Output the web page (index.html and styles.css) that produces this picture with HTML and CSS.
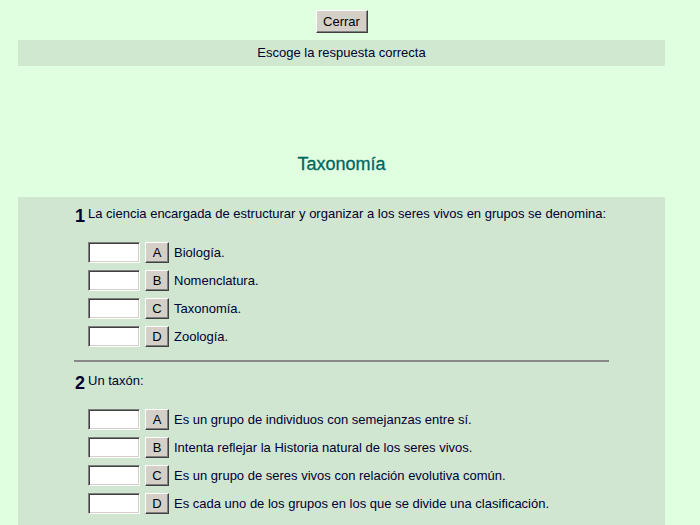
FILE: index.html
```html
<!DOCTYPE html>
<html lang="es">
<head>
<meta charset="utf-8">
<title>Taxonomía</title>
<link rel="stylesheet" href="styles.css">
</head>
<body>
<div class="page">
<div class="top"><button class="btn close">Cerrar</button></div>
<div class="banner">Escoge la respuesta correcta</div>
<h1 class="title">Taxonomía</h1>
<div class="panel">
  <div class="question">
    <div class="q-head"><span class="q-num">1</span><span class="q-text">La ciencia encargada de estructurar y organizar a los seres vivos en grupos se denomina:</span></div>
    <div class="options">
      <div class="opt"><input class="ans" type="text"><button class="btn letter">A</button><span class="opt-text">Biología.</span></div>
      <div class="opt"><input class="ans" type="text"><button class="btn letter">B</button><span class="opt-text">Nomenclatura.</span></div>
      <div class="opt"><input class="ans" type="text"><button class="btn letter">C</button><span class="opt-text">Taxonomía.</span></div>
      <div class="opt"><input class="ans" type="text"><button class="btn letter">D</button><span class="opt-text">Zoología.</span></div>
    </div>
  </div>
  <hr class="sep">
  <div class="question">
    <div class="q-head"><span class="q-num">2</span><span class="q-text">Un taxón:</span></div>
    <div class="options">
      <div class="opt"><input class="ans" type="text"><button class="btn letter">A</button><span class="opt-text">Es un grupo de individuos con semejanzas entre sí.</span></div>
      <div class="opt"><input class="ans" type="text"><button class="btn letter">B</button><span class="opt-text">Intenta reflejar la Historia natural de los seres vivos.</span></div>
      <div class="opt"><input class="ans" type="text"><button class="btn letter">C</button><span class="opt-text">Es un grupo de seres vivos con relación evolutiva común.</span></div>
      <div class="opt"><input class="ans" type="text"><button class="btn letter">D</button><span class="opt-text">Es cada uno de los grupos en los que se divide una clasificación.</span></div>
    </div>
  </div>
</div>
</div>
</body>
</html>
```
FILE: styles.css
```css
html, body {
  margin: 0;
  padding: 0;
  background: #e0ffe0;
  font-family: "Liberation Sans", Arial, sans-serif;
  font-size: 13px;
  color: #000033;
}
.page {
  width: 683px;
}
.top {
  padding-top: 10px;
  text-align: center;
  height: 23px;
}
.btn {
  font-family: "Liberation Sans", Arial, sans-serif;
  font-size: 13px;
  color: #000;
  background: #d4d0c8;
  border: 1px solid;
  border-color: #ffffff #404040 #404040 #ffffff;
  box-shadow: inset -1px -1px 0 #808080;
  padding: 0;
  margin: 0;
  box-sizing: border-box;
}
.close {
  width: 52px;
  height: 23px;
}
.banner {
  margin: 7px 18px 0 18px;
  height: 26px;
  line-height: 26px;
  background: #d0e8d0;
  text-align: center;
}
.title {
  margin: 87px 0 0 0;
  height: 22px;
  line-height: 22px;
  font-size: 18px;
  font-weight: normal;
  color: #006660;
  text-align: center;
  -webkit-text-stroke: 0.3px #006660;
}
.panel {
  margin: 22px 18px 0 18px;
  background: #d0e6d0;
  padding: 10px 0 4px 57px;
  min-height: 330px;
}
.q-head {
  display: flex;
  align-items: flex-start;
  height: 18px;
}
.q-num {
  width: 13px;
  font-size: 18px;
  line-height: 18px;
  font-weight: bold;
}
.q-text {
  line-height: 13px;
}
.options {
  margin-top: 17px;
  padding-left: 13px;
  display: flex;
  flex-direction: column;
  gap: 7px;
}
.opt {
  display: flex;
  align-items: center;
  height: 21px;
}
.ans {
  width: 52px;
  height: 21px;
  box-sizing: border-box;
  margin: 0 5px 0 0;
  padding: 0;
  background: #fff;
  border: 1px solid;
  border-color: #808080 #ffffff #ffffff #808080;
  box-shadow: inset 1px 1px 0 #404040, inset -1px -1px 0 #d4d0c8;
  outline: none;
}
.letter {
  width: 24px;
  height: 21px;
  margin-right: 5px;
}
.sep {
  margin: 13px 0 12px -1px;
  width: 535px;
  height: 0;
  border: 0;
  border-top: 2px solid #888888;
}
```
